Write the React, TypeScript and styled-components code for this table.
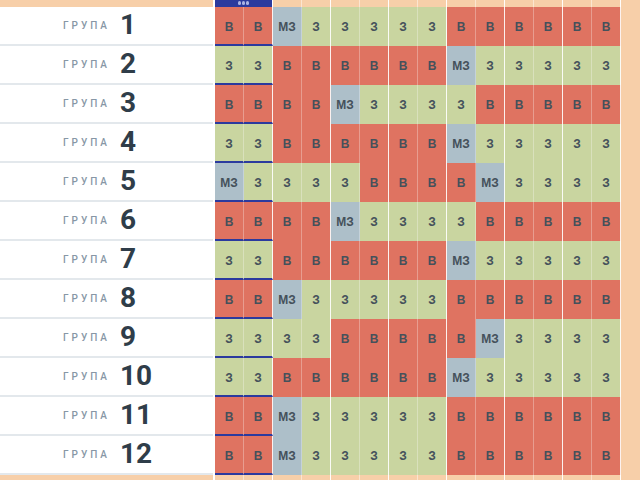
import { createGlobalStyle, styled } from "styled-components";

type Kind = "В" | "З" | "МЗ";

const rows: Kind[][] = [
  "В В МЗ З З З З З В В В В В В",
  "З З В В В В В В МЗ З З З З З",
  "В В В В МЗ З З З З В В В В В",
  "З З В В В В В В МЗ З З З З З",
  "МЗ З З З З В В В В МЗ З З З З",
  "В В В В МЗ З З З З В В В В В",
  "З З В В В В В В МЗ З З З З З",
  "В В МЗ З З З З З В В В В В В",
  "З З З З В В В В В МЗ З З З З",
  "З З В В В В В В МЗ З З З З З",
  "В В МЗ З З З З З В В В В В В",
  "В В МЗ З З З З З В В В В В В",
].map((r) => r.split(" ") as Kind[]);

const COLS = 14;
const PEACH = "#f7cfa9";

const fills: Record<Kind, string> = {
  "В": "#df7361",
  "З": "#c9d5a0",
  "МЗ": "#adbfc9",
};

const GlobalStyle = createGlobalStyle`
  html, body {
    margin: 0;
    padding: 0;
    background: #fff;
    overflow: hidden;
  }
`;

export default function App() {
  return (
    <>
      <GlobalStyle />
      <Page>
        <Sidebar>
          <Strip $h={7} />
          {rows.map((_, i) => (
            <GroupRow key={i}>
              <Word>ГРУПА</Word>
              <Num>{i + 1}</Num>
            </GroupRow>
          ))}
          <Strip $h={5} />
        </Sidebar>

        <Board>
          <EdgeRow $h={7}>
            <PinnedHead>
              <Dot />
              <Dot />
              <Dot />
            </PinnedHead>
            {Array.from({ length: COLS - 2 }, (_, c) => (
              <EdgeCell key={c} $pairEnd={(c + 2) % 2 === 1} />
            ))}
          </EdgeRow>

          {rows.map((row, r) => (
            <Row key={r}>
              {row.map((k, c) => (
                <Cell key={c} $fill={fills[k]} $pinned={c < 2} $pairEnd={c % 2 === 1}>
                  {k}
                </Cell>
              ))}
            </Row>
          ))}

          <EdgeRow $h={5}>
            {Array.from({ length: COLS }, (_, c) => (
              <EdgeCell key={c} $pairEnd={c % 2 === 1} />
            ))}
          </EdgeRow>
        </Board>

        <RightStrip />
      </Page>
    </>
  );
}

const Page = styled.div`
  display: flex;
  width: 640px;
  height: 480px;
  overflow: hidden;
`;

const Sidebar = styled.div`
  width: 213px;
  margin-right: 2px;
  display: flex;
  flex-direction: column;
`;

const Strip = styled.div<{ $h: number }>`
  height: ${(p) => p.$h}px;
  background: ${PEACH};
`;

const GroupRow = styled.div`
  height: 39px;
  box-sizing: border-box;
  border-bottom: 2px solid #e3e8ec;
  display: grid;
  grid-template-columns: 120px 1fr;
  align-items: center;
`;

const Word = styled.span`
  justify-self: end;
  padding-right: 10px;
  font-family: Roboto, "Noto Sans", sans-serif;
  font-weight: 500;
  font-size: 10px;
  letter-spacing: 3px;
  color: #8797a6;
`;

const Num = styled.span`
  font-family: Roboto, "Noto Sans", sans-serif;
  font-weight: 700;
  font-size: 28px;
  line-height: 1;
  color: #2f3d49;
  padding-bottom: 1px;
`;

const Board = styled.div`
  width: 406px;
  display: flex;
  flex-direction: column;
`;

const EdgeRow = styled.div<{ $h: number }>`
  height: ${(p) => p.$h}px;
  display: flex;
`;

const EdgeCell = styled.div<{ $pairEnd: boolean }>`
  width: 29px;
  box-sizing: border-box;
  background: ${PEACH};
  border-right: 1px solid
    ${(p) => (p.$pairEnd ? "rgba(255,255,255,0.95)" : "rgba(255,255,255,0.45)")};
`;

const PinnedHead = styled.div`
  width: 58px;
  box-sizing: border-box;
  background: #2b3a9e;
  border-right: 1px solid #fff;
  display: flex;
  justify-content: center;
  align-items: center;
  gap: 0.5px;
  padding-bottom: 1px;
`;

const Dot = styled.span`
  width: 3.5px;
  height: 3.5px;
  border-radius: 50%;
  background: #a9b3e4;
`;

const Row = styled.div`
  height: 39px;
  display: flex;
`;

const Cell = styled.div<{ $fill: string; $pinned: boolean; $pairEnd: boolean }>`
  width: 29px;
  box-sizing: border-box;
  background: ${(p) => p.$fill};
  border-right: 1px solid
    ${(p) => (p.$pairEnd ? "rgba(255,255,255,0.9)" : "rgba(255,255,255,0.3)")};
  border-bottom: ${(p) => (p.$pinned ? "2px solid #2b3a9e" : "none")};
  display: flex;
  align-items: center;
  justify-content: center;
  font-family: "Liberation Sans", Arial, sans-serif;
  font-weight: 700;
  font-size: 12px;
  color: #45515b;
  padding-top: ${(p) => (p.$pinned ? "2px" : "0")};
`;

const RightStrip = styled.div`
  flex: 1;
  background: ${PEACH};
`;
